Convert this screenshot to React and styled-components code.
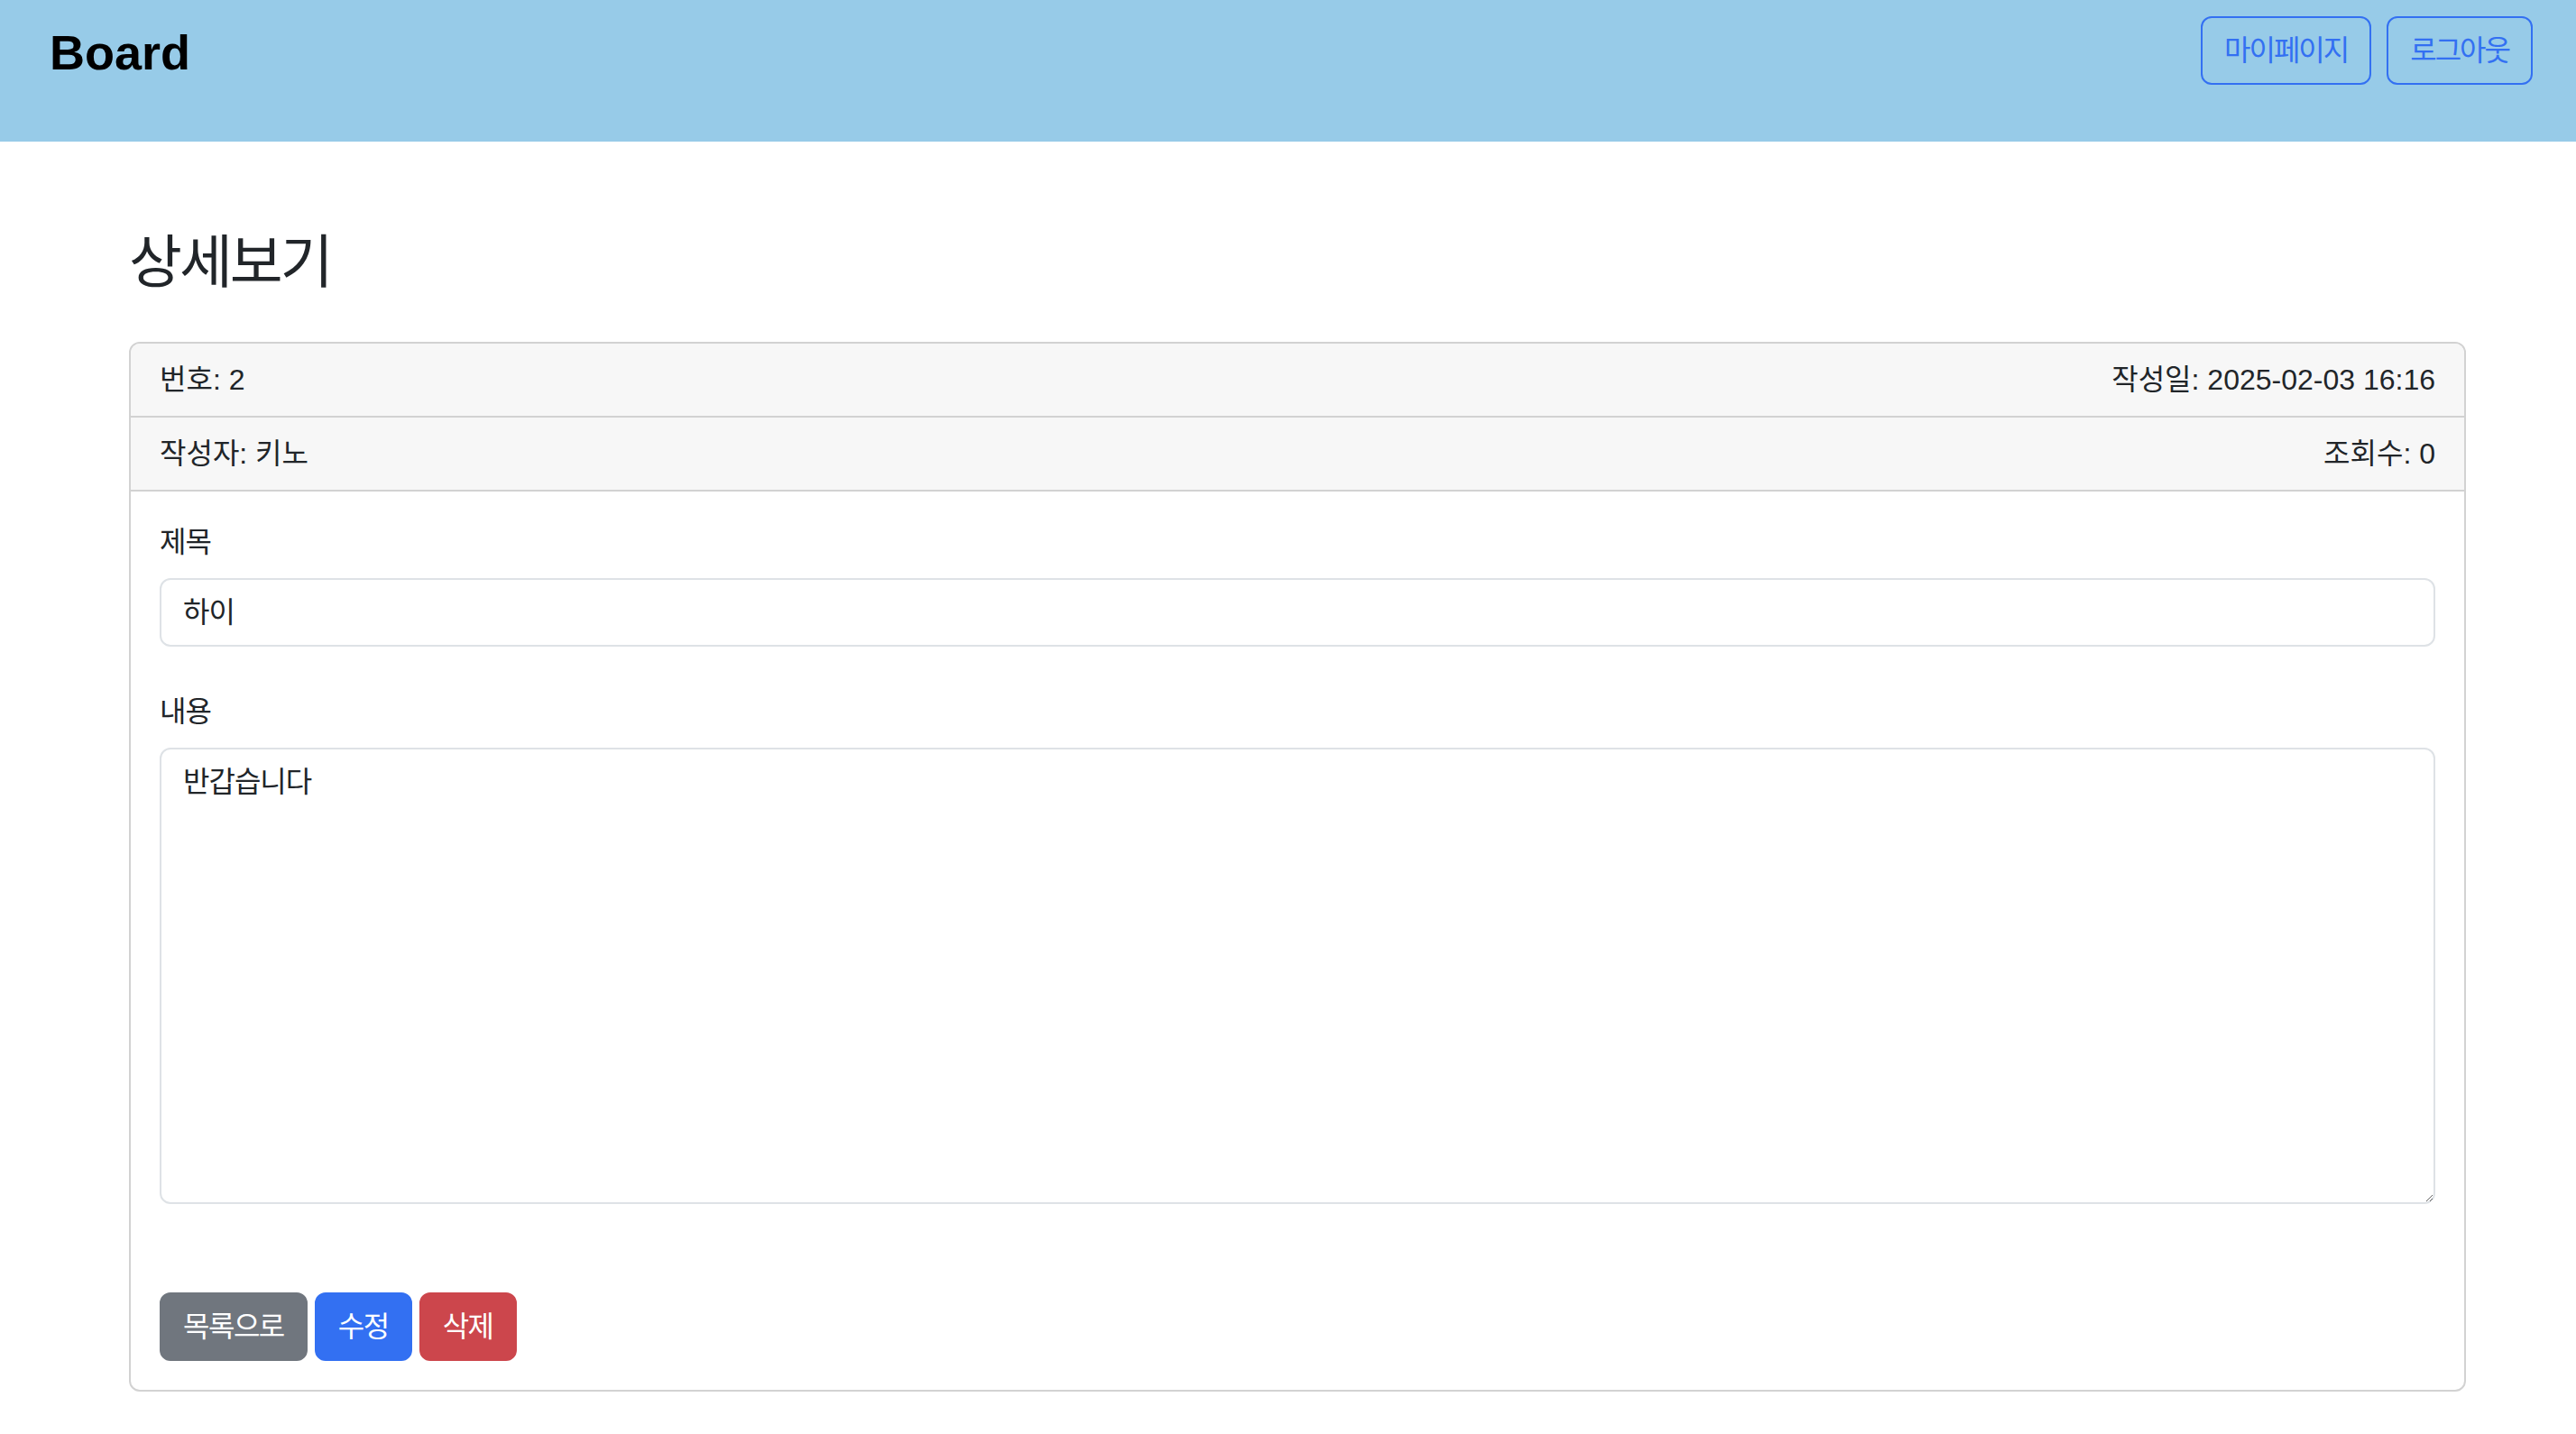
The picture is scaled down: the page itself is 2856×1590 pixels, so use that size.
import React from "react";
import styled, { createGlobalStyle } from "styled-components";

const GlobalStyle = createGlobalStyle`
  html, body {
    margin: 0;
    padding: 0;
    background: #ffffff;
  }
  body {
    font-family: "Liberation Sans", "Noto Sans CJK KR", sans-serif;
    font-size: 32px;
    line-height: 1.5;
    color: #212529;
    font-feature-settings: "palt";
  }
  * { box-sizing: border-box; }
`;

const TopBar = styled.header`
  height: 157px;
  background: #97cbe8;
  display: flex;
  justify-content: space-between;
  align-items: flex-start;
  padding: 18px 48px 0 55px;
`;

const Brand = styled.div`
  font-family: "Liberation Sans", Arial, sans-serif;
  font-weight: 700;
  font-size: 54px;
  line-height: 80px;
  color: #000;
`;

const NavActions = styled.div`
  display: flex;
  gap: 17px;
`;

const OutlineButton = styled.button`
  font-family: inherit;
  font-size: 32px;
  line-height: 48px;
  letter-spacing: -2px;
  padding: 12px 24px;
  border: 2px solid #3370f2;
  border-radius: 12px;
  background: transparent;
  color: #3370f2;
  cursor: pointer;
`;

const Main = styled.main`
  padding: 96px 0 48px 143px;
`;

const PageTitle = styled.h2`
  margin: 0 0 49px;
  font-family: "Liberation Sans", "Noto Sans CJK KR", sans-serif;
  font-size: 64px;
  font-weight: 400;
  line-height: 77px;
  letter-spacing: -3px;
  color: #212529;
`;

const Card = styled.section`
  width: 2591px;
  border: 2px solid #d2d2d2;
  border-radius: 12px;
  overflow: hidden;
`;

const MetaRow = styled.div`
  display: flex;
  justify-content: space-between;
  padding: 16px 32px;
  line-height: 48px;
  background: #f7f7f7;
  border-bottom: 2px solid #d2d2d2;
`;

const CardBody = styled.div`
  padding: 32px;
`;

const Field = styled.div`
  margin-bottom: ${(p) => p.$mb}px;
`;

const Label = styled.label`
  display: block;
  margin-bottom: 16px;
  line-height: 48px;
  letter-spacing: -1px;
`;

const TextInput = styled.input`
  display: block;
  width: 100%;
  font-family: inherit;
  font-size: 32px;
  line-height: 48px;
  letter-spacing: -1px;
  padding: 12px 24px;
  border: 2px solid #dee2e6;
  border-radius: 12px;
  color: #212529;
  background: #fff;
  outline: none;
`;

const TextArea = styled.textarea`
  display: block;
  width: 100%;
  height: 506px;
  font-family: inherit;
  font-size: 32px;
  line-height: 48px;
  letter-spacing: -1px;
  padding: 12px 24px;
  border: 2px solid #dee2e6;
  border-radius: 12px;
  color: #212529;
  background: #fff;
  resize: vertical;
  outline: none;
`;

const ActionRow = styled.div`
  display: flex;
  gap: 8px;
`;

const tones = {
  gray: "#70767e",
  blue: "#3370f2",
  red: "#cc464c",
};

const SolidButton = styled.button`
  font-family: inherit;
  font-size: 32px;
  line-height: 48px;
  letter-spacing: -1.5px;
  padding: 12px 24px;
  border: 2px solid ${(p) => tones[p.$tone]};
  border-radius: 12px;
  background: ${(p) => tones[p.$tone]};
  color: #fff;
  cursor: pointer;
`;

export default function App() {
  return (
    <>
      <GlobalStyle />
      <TopBar>
        <Brand>Board</Brand>
        <NavActions>
          <OutlineButton>마이페이지</OutlineButton>
          <OutlineButton>로그아웃</OutlineButton>
        </NavActions>
      </TopBar>
      <Main>
        <PageTitle>상세보기</PageTitle>
        <Card>
          <MetaRow>
            <span>번호: 2</span>
            <span>작성일: 2025-02-03 16:16</span>
          </MetaRow>
          <MetaRow>
            <span>작성자: 키노</span>
            <span>조회수: 0</span>
          </MetaRow>
          <CardBody>
            <Field $mb={48}>
              <Label>제목</Label>
              <TextInput defaultValue="하이" readOnly />
            </Field>
            <Field $mb={98}>
              <Label>내용</Label>
              <TextArea defaultValue="반갑습니다" readOnly />
            </Field>
            <ActionRow>
              <SolidButton $tone="gray">목록으로</SolidButton>
              <SolidButton $tone="blue">수정</SolidButton>
              <SolidButton $tone="red">삭제</SolidButton>
            </ActionRow>
          </CardBody>
        </Card>
      </Main>
    </>
  );
}
